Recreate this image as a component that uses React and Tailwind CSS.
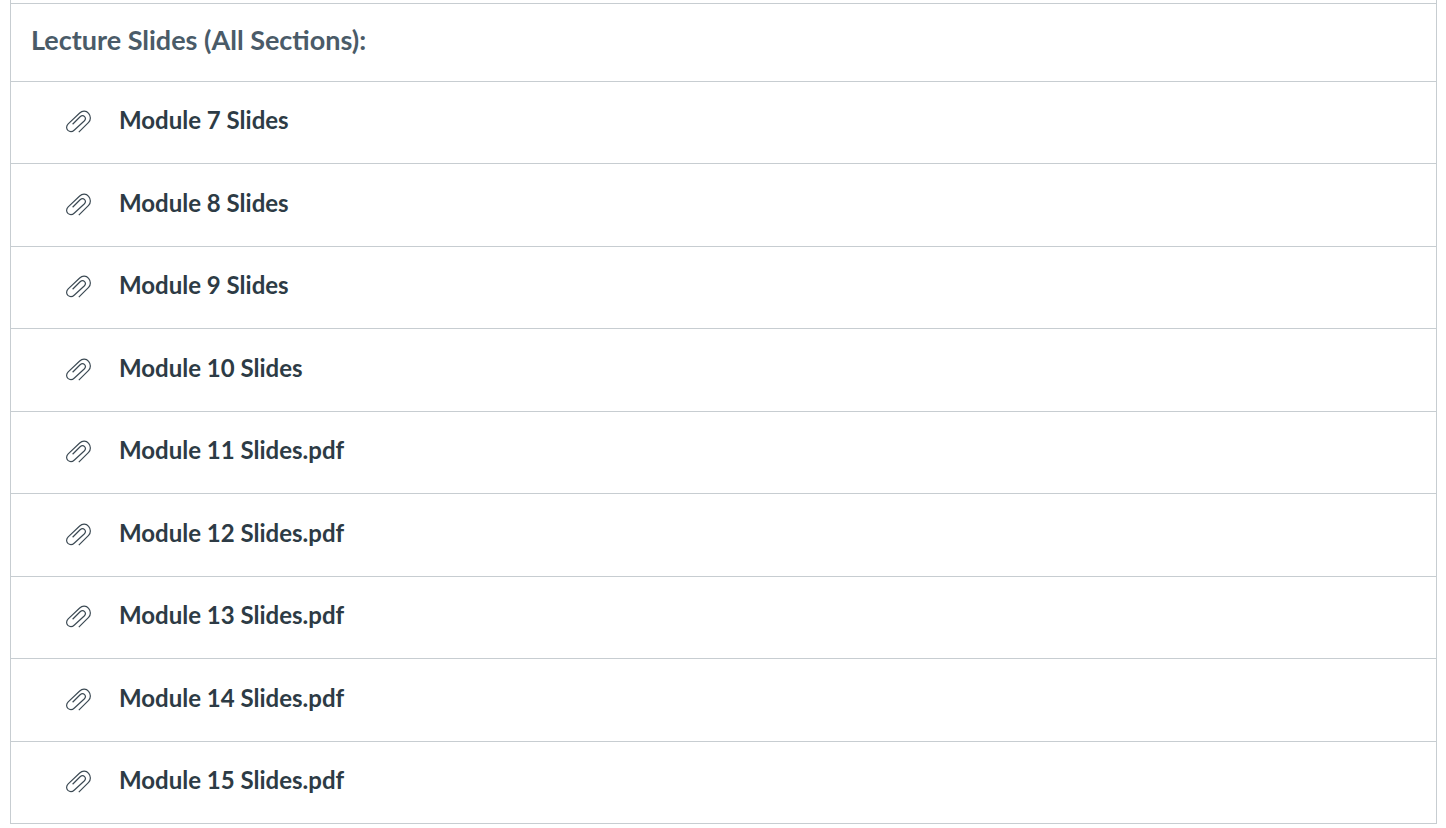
import React from 'react';

const slides = [
  'Module 7 Slides',
  'Module 8 Slides',
  'Module 9 Slides',
  'Module 10 Slides',
  'Module 11 Slides.pdf',
  'Module 12 Slides.pdf',
  'Module 13 Slides.pdf',
  'Module 14 Slides.pdf',
  'Module 15 Slides.pdf',
];

const PaperclipIcon = () => (
  <svg
    className="mb-[3px] h-6 w-[26px] shrink-0 text-[#3c4a54]"
    viewBox="0 0 26 24"
    fill="none"
    stroke="currentColor"
    strokeWidth="1.2"
    aria-hidden="true"
  >
    <path d="M13.8 23.2L23.6 13.4C25.9 11 26 7 23.6 4.3C21.2 1.6 17.3 1.5 14.7 4L3.2 14.9C1.2 16.9 1.1 19.7 2.9 21.4C4.7 23 7.5 22.8 9.4 21L19.2 12C20.6 10.6 20.7 8.8 19.6 7.6C18.4 6.4 16.5 6.5 15.1 7.8L7.6 15.2" />
  </svg>
);

const SlideRow = ({ title }) => (
  <li className="flex h-[83px] items-center gap-7 border-b border-[#c7cdd1] pl-[54px] odd:h-[82px]">
    <PaperclipIcon />
    <a href="#" className="pb-[5px] text-2xl font-bold text-[#2d3b45]">
      {title}
    </a>
  </li>
);

const App = () => {
  return (
    <main className="bg-white pr-[9px] pl-2.5 font-['Lato',sans-serif]">
      <section className="border-x border-[#c7cdd1] pt-[3px]">
        <h2 className="flex h-[79px] items-center border-y border-[#c7cdd1] px-5 pb-1 text-[27px] font-bold text-[#4a5b68]">
          Lecture Slides (All Sections):
        </h2>
        <ul>
          {slides.map((title) => (
            <SlideRow key={title} title={title} />
          ))}
        </ul>
      </section>
    </main>
  );
};

export default App;
